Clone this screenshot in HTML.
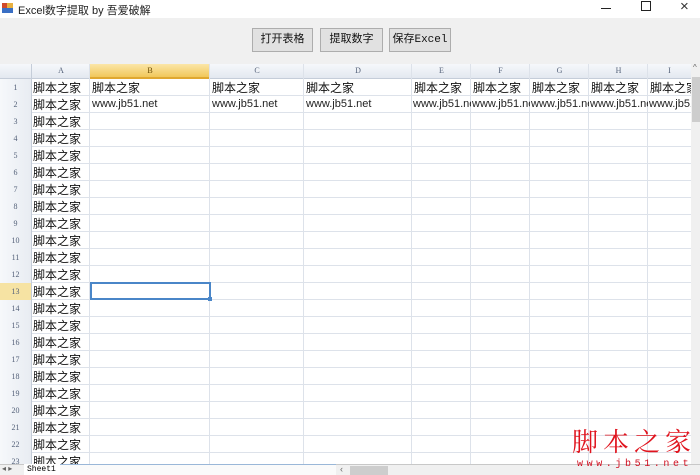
<!DOCTYPE html>
<html><head><meta charset="utf-8"><style>
*{margin:0;padding:0;box-sizing:border-box}
body{width:700px;height:475px;overflow:hidden;background:#f0f0f0;position:relative;font-family:"Liberation Sans","Noto Sans CJK SC",sans-serif}
.abs{position:absolute}
.title{left:0;top:0;width:700px;height:18px;background:#fff;font-size:11px;color:#222}
.btn{top:28px;height:24px;border:1px solid #adadad;background:#e1e1e1;font-size:11px;text-align:center;line-height:22px;color:#111;font-family:"Liberation Mono","Noto Sans CJK SC",monospace}
.grid{left:0;top:64px;width:691px;height:400px;background:#fff;overflow:hidden}
.hdr{top:0;height:15px;background:linear-gradient(#f6f8fb,#e3e8f0);border-bottom:1px solid #c5cdd9;font-size:8px;color:#55627a;text-align:center;line-height:14px;font-family:"Liberation Serif",serif}
.hl{left:0;top:15px;width:691px;height:400px;background:repeating-linear-gradient(to bottom,transparent 0,transparent 16px,#dde2ea 16px,#dde2ea 17px)}
.vl{top:0;width:1px;height:400px;background:#dde2ea}
.rn{left:0;top:15px;width:31px;background:linear-gradient(90deg,#f6f8fb,#e8ecf2);font-size:8px;color:#55627a;text-align:center;font-family:"Liberation Serif",serif}
.rn div,.ca div{height:17px;line-height:17px}
.ca{left:33px;top:15px;font-size:12px;color:#111;font-family:"Noto Sans CJK SC",sans-serif}
.t{font-size:12px;color:#111;line-height:17px;white-space:nowrap;overflow:hidden;font-family:"Noto Sans CJK SC",sans-serif}
.u{font-size:11px;color:#222;line-height:17px;white-space:nowrap;overflow:hidden}
</style></head><body>
<div class="abs title">
 <div class="abs" style="left:2px;top:3px;width:5px;height:5px;background:#d04a2a"></div>
 <div class="abs" style="left:7px;top:3px;width:6px;height:5px;background:#e8b040"></div>
 <div class="abs" style="left:2px;top:8px;width:11px;height:5px;background:#3a6fc4"></div>
 <div class="abs" style="left:18px;top:2px;font-family:'Liberation Sans','Noto Sans CJK SC',sans-serif">Excel数字提取 by 吾爱破解</div>
 <div class="abs" style="left:601px;top:8px;width:10px;height:1px;background:#222"></div>
 <div class="abs" style="left:641px;top:1px;width:10px;height:10px;border:1px solid #222"></div>
 <div class="abs" style="left:680px;top:-2px;font-size:15px;color:#333">×</div>
</div>
<div class="abs btn" style="left:252px;width:61px">打开表格</div>
<div class="abs btn" style="left:320px;width:63px">提取数字</div>
<div class="abs btn" style="left:389px;width:62px">保存Excel</div>
<div class="abs grid">
 <div class="abs hl"></div>
 <div class="abs hdr" style="left:0;width:32px"></div>
 <div class="abs hdr" style="left:32px;width:58px">A</div>
 <div class="abs hdr" style="left:90px;width:120px;background:linear-gradient(#fbe6a8,#f1c75a);border-bottom:2px solid #e0a830;color:#6a4a00">B</div>
 <div class="abs hdr" style="left:210px;width:94px">C</div>
 <div class="abs hdr" style="left:304px;width:108px">D</div>
 <div class="abs hdr" style="left:412px;width:59px">E</div>
 <div class="abs hdr" style="left:471px;width:59px">F</div>
 <div class="abs hdr" style="left:530px;width:59px">G</div>
 <div class="abs hdr" style="left:589px;width:59px">H</div>
 <div class="abs hdr" style="left:648px;width:43px">I</div>
 <div class="abs vl" style="left:31px;background:#c5cdd9"></div>
 <div class="abs vl" style="left:89px"></div><div class="abs vl" style="left:209px"></div>
 <div class="abs vl" style="left:303px"></div><div class="abs vl" style="left:411px"></div>
 <div class="abs vl" style="left:470px"></div><div class="abs vl" style="left:529px"></div>
 <div class="abs vl" style="left:588px"></div><div class="abs vl" style="left:647px"></div>
 <div class="abs rn"><div>1</div><div>2</div><div>3</div><div>4</div><div>5</div><div>6</div><div>7</div><div>8</div><div>9</div><div>10</div><div>11</div><div>12</div><div style="background:#f6e3a3">13</div><div>14</div><div>15</div><div>16</div><div>17</div><div>18</div><div>19</div><div>20</div><div>21</div><div>22</div><div>23</div></div>
 <div class="abs ca"><div>脚本之家</div><div>脚本之家</div><div>脚本之家</div><div>脚本之家</div><div>脚本之家</div><div>脚本之家</div><div>脚本之家</div><div>脚本之家</div><div>脚本之家</div><div>脚本之家</div><div>脚本之家</div><div>脚本之家</div><div>脚本之家</div><div>脚本之家</div><div>脚本之家</div><div>脚本之家</div><div>脚本之家</div><div>脚本之家</div><div>脚本之家</div><div>脚本之家</div><div>脚本之家</div><div>脚本之家</div><div>脚本之家</div></div>
 <div class="abs t" style="left:92px;top:15px;width:116px">脚本之家</div>
 <div class="abs t" style="left:212px;top:15px;width:90px">脚本之家</div>
 <div class="abs t" style="left:306px;top:15px;width:104px">脚本之家</div>
 <div class="abs t" style="left:414px;top:15px;width:56px">脚本之家</div>
 <div class="abs t" style="left:473px;top:15px;width:56px">脚本之家</div>
 <div class="abs t" style="left:532px;top:15px;width:56px">脚本之家</div>
 <div class="abs t" style="left:591px;top:15px;width:56px">脚本之家</div>
 <div class="abs t" style="left:650px;top:15px;width:41px">脚本之家</div>
 <div class="abs u" style="left:92px;top:32px;width:116px">www.jb51.net</div>
 <div class="abs u" style="left:212px;top:32px;width:90px">www.jb51.net</div>
 <div class="abs u" style="left:306px;top:32px;width:104px">www.jb51.net</div>
 <div class="abs u" style="left:413px;top:32px;width:58px">www.jb51.net</div>
 <div class="abs u" style="left:472px;top:32px;width:58px">www.jb51.net</div>
 <div class="abs u" style="left:531px;top:32px;width:58px">www.jb51.net</div>
 <div class="abs u" style="left:590px;top:32px;width:58px">www.jb51.net</div>
 <div class="abs u" style="left:649px;top:32px;width:42px">www.jb51.net</div>
 <div class="abs" style="left:90px;top:218px;width:121px;height:18px;border:2px solid #4a86c8"></div>
 <div class="abs" style="left:208px;top:233px;width:4px;height:4px;background:#4a86c8"></div>
</div>
<div class="abs" style="left:691px;top:64px;width:9px;height:400px;background:#f0f0f0"></div>
<div class="abs" style="left:692px;top:77px;width:8px;height:45px;background:#cdcdcd"></div>
<div class="abs" style="left:693px;top:63px;font-size:8px;color:#666">^</div>
<div class="abs" style="left:0;top:464px;width:700px;height:11px;background:#f0f0f0;border-top:1px solid #c8c8c8"></div>
<div class="abs" style="left:2px;top:464px;font-size:8px;color:#666">◂ ▸</div>
<div class="abs" style="left:24px;top:464px;width:36px;height:11px;background:#fff;font-size:8px;line-height:11px;padding-left:3px;font-family:'Liberation Mono',monospace">Sheet1</div>
<div class="abs" style="left:60px;top:464px;width:276px;height:11px;background:#fafafa;border-top:1px solid #9ab7d8"></div>
<div class="abs" style="left:340px;top:464px;font-size:9px;color:#666">‹</div>
<div class="abs" style="left:350px;top:466px;width:38px;height:9px;background:#cdcdcd"></div>
<div class="abs" style="left:572px;top:424px;font-size:26px;color:#e0141e;letter-spacing:5px;white-space:nowrap;font-family:'Noto Serif CJK SC','Noto Sans CJK SC',serif;line-height:34px">脚本之家</div>
<div class="abs" style="left:577px;top:459px;font-size:10px;color:#d01020;letter-spacing:3.6px;white-space:nowrap;line-height:11px;font-family:'Liberation Mono',monospace">www.jb51.net</div>
</body></html>
